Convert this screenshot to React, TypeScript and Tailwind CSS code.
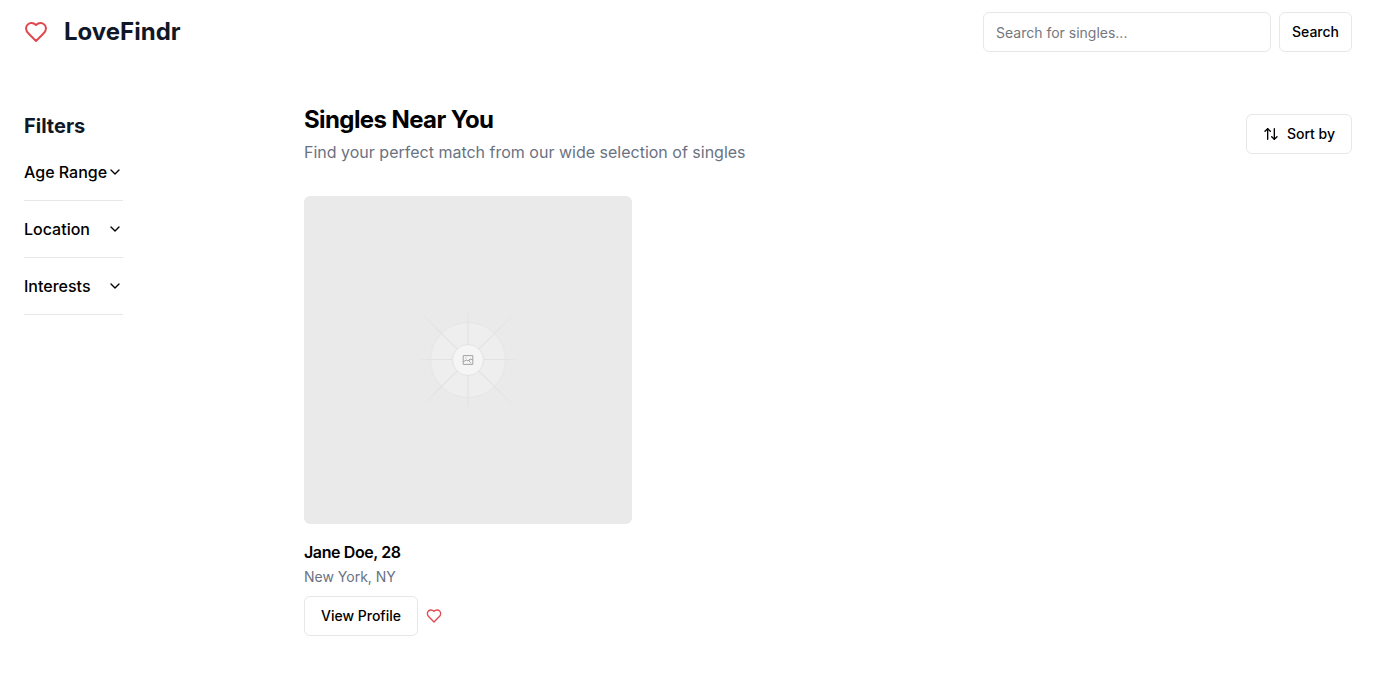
import { ArrowUpDown, ChevronDown } from "lucide-react";

const outline =
  "inline-flex h-10 shrink-0 items-center justify-center rounded-md border border-gray-200 bg-white text-sm font-medium text-black hover:bg-gray-50";

const filters = ["Age Range", "Location", "Interests"];

const singles = [{ name: "Jane Doe", age: 28, location: "New York, NY" }];

function HeartIcon({ className }: { className: string }) {
  return (
    <svg
      viewBox="0 0 24 24"
      aria-hidden="true"
      className={className}
      fill="none"
      stroke="currentColor"
      strokeWidth="2"
      strokeLinecap="round"
      strokeLinejoin="round"
    >
      <path d="M19 14c1.49-1.46 3-3.21 3-5.5A5.5 5.5 0 0 0 16.5 3c-1.76 0-3 .5-4.5 2-1.5-1.5-2.74-2-4.5-2A5.5 5.5 0 0 0 2 8.5c0 2.3 1.5 4.05 3 5.5l7 7Z" />
    </svg>
  );
}

function PhotoPlaceholder() {
  return (
    <svg
      viewBox="0 0 328 328"
      role="img"
      aria-label="Profile photo placeholder"
      className="block aspect-square w-full rounded-md bg-[#eaeaea]"
      fill="none"
    >
      <defs>
        <radialGradient id="ray" gradientUnits="userSpaceOnUse" cx="164" cy="164" r="54">
          <stop offset="0.7" stopColor="#e2e2e2" />
          <stop offset="1" stopColor="#eaeaea" />
        </radialGradient>
        <radialGradient id="diagonal" gradientUnits="userSpaceOnUse" cx="164" cy="164" r="70">
          <stop offset="0.6" stopColor="#e2e2e2" />
          <stop offset="1" stopColor="#eaeaea" />
        </radialGradient>
      </defs>
      <circle cx="164" cy="164" r="37.5" fill="#eeeeee" stroke="#e6e6e6" />
      <path d="M164 114V214M114 163.5H214" stroke="url(#ray)" strokeWidth="1.2" />
      <path d="M118 118L210 210M210 118L118 210" stroke="url(#diagonal)" strokeWidth="1.2" />
      <circle cx="164" cy="164" r="15.5" fill="#f5f5f5" stroke="#e3e3e3" />
      <path
        d="M159.2 159.6H168.8V168.4H159.2ZM159.2 165.8L162.2 164L164 165L166 163L168.8 163.8M165.4 164.2C165.2 165.8 166 166.6 167.2 167M161.4 162H162.4"
        stroke="#a3a3a3"
      />
    </svg>
  );
}

export default function App() {
  return (
    <div className="min-h-screen bg-white font-[Inter,sans-serif] text-black">
      <header className="flex h-16 items-center justify-between px-6">
        <a href="#" className="flex items-center gap-4">
          <HeartIcon className="size-6 text-[#e0484f]" />
          <span className="text-2xl font-bold text-gray-900">LoveFindr</span>
        </a>
        <form className="flex items-center gap-2" onSubmit={(e) => e.preventDefault()}>
          <input
            type="search"
            aria-label="Search for singles"
            placeholder="Search for singles..."
            className="h-10 w-72 rounded-md border border-gray-200 bg-white px-3 text-sm placeholder:text-[#75777e]"
          />
          <button type="submit" className={`${outline} px-3`}>
            Search
          </button>
        </form>
      </header>

      <div className="flex gap-10 px-6 pt-10 pb-14">
        <aside className="w-60 shrink-0 pt-2">
          <h2 className="mb-1 text-xl font-bold text-gray-900">Filters</h2>
          <div className="w-fit">
            {filters.map((label) => (
              <div key={label} className="border-b border-gray-200">
                <button
                  type="button"
                  aria-expanded="false"
                  className="flex w-full items-center justify-between py-4 text-base font-medium"
                >
                  {label}
                  <ChevronDown className="size-4" />
                </button>
              </div>
            ))}
          </div>
        </aside>

        <main className="min-w-0 flex-1">
          <div className="mb-8 flex items-center justify-between">
            <div className="grid gap-1">
              <h1 className="text-2xl font-bold tracking-tight">Singles Near You</h1>
              <p className="text-gray-500">
                Find your perfect match from our wide selection of singles
              </p>
            </div>
            <button type="button" className={`${outline} gap-2 px-4`}>
              <ArrowUpDown className="size-4" />
              Sort by
            </button>
          </div>

          <div className="grid grid-cols-3 gap-8">
            {singles.map((person) => (
              <article key={person.name}>
                <PhotoPlaceholder />
                <div className="mt-4 grid gap-[3px]">
                  <h3 className="font-semibold tracking-tight">
                    {`${person.name}, ${person.age}`}
                  </h3>
                  <p className="text-sm text-gray-500">{person.location}</p>
                </div>
                <div className="mt-[9px] flex items-center gap-2">
                  <button type="button" className={`${outline} px-4`}>
                    View Profile
                  </button>
                  <button type="button" aria-label={`Like ${person.name}`}>
                    <HeartIcon className="size-4 text-[#e0484f]" />
                  </button>
                </div>
              </article>
            ))}
          </div>
        </main>
      </div>
    </div>
  );
}
